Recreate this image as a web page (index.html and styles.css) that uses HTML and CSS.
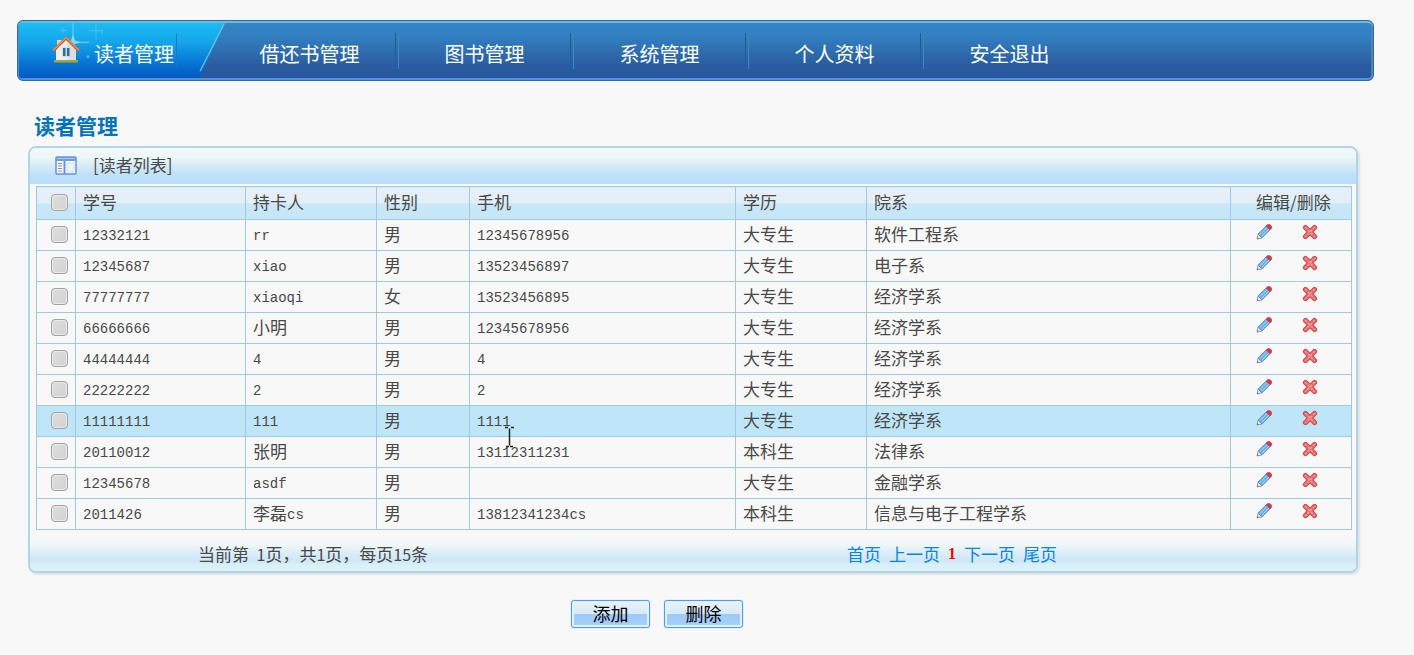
FILE: index.html
```
<!DOCTYPE html>
<html lang="zh-CN">
<head>
<meta charset="utf-8">
<title>读者管理</title>
<link rel="stylesheet" href="styles.css">
</head>
<body>
<svg class="sprites" aria-hidden="true">
  <symbol id="pencil" viewBox="0 0 16 16">
    <path d="M1 15l1-5 4 4z" fill="#e9e4df" stroke="#8d8d8d" stroke-width=".8"/>
    <path d="M1 15l.4-2 1.6 1.600z" fill="#777"/>
    <path d="M2 10l8-8 4 4-8 8z" fill="#6ab0ea" stroke="#5a8fc2" stroke-width=".8"/>
    <path d="M4 10.500l7-7M6 12l7-7" stroke="#a8d4f8" stroke-width="1"/>
    <path d="M10 2l1.500-1.500h2.500l1.800 1.800v2L14 6z" fill="#d8384c" stroke="#b83c50" stroke-width=".5"/>
  </symbol>
  <symbol id="cross" viewBox="0 0 16 16">
    <path d="M3.500 3.500l9 9M12.500 3.500l-9 9" stroke="#c24a4e" stroke-width="5.200" stroke-linecap="round"/>
    <path d="M3.500 3.500l9 9M12.500 3.500l-9 9" stroke="#e86464" stroke-width="3.600" stroke-linecap="round"/>
    <path d="M3.500 3.500l9 9M12.500 3.500l-9 9" stroke="#f4a4a2" stroke-width="1.400" stroke-dasharray="1.500 2.500" stroke-linecap="round"/>
  </symbol>
</svg>
<nav class="nav">
  <a class="nav-item active" href="#">
    <svg class="active-bg" viewBox="0 0 206 57" preserveAspectRatio="none" aria-hidden="true">
      <defs>
        <linearGradient id="sky" x1="0" y1="0" x2="0" y2="1"><stop offset="0" stop-color="#1bbcf4"/><stop offset=".35" stop-color="#15a5ea"/><stop offset=".7" stop-color="#0878d5"/><stop offset="1" stop-color="#0458c1"/></linearGradient>
      </defs>
      <path d="M3 0H206L180 57H3Q0 57 0 54V3Q0 0 3 0z" fill="url(#sky)"/>
      <path d="M205 1L181 50" stroke="#66bdf2" stroke-width="1.300"/>
      <path d="M157.500 11v34" stroke="#0f7cc9"/>
      <path d="M54 0v28M40 20h30" stroke="#8fe0fc" stroke-width="1.200" opacity=".65"/>
      <path d="M54 12l2 6 6 2-6 2-2 6-2-6-6-2 6-2z" fill="#b8ecff" opacity=".6"/>
      <path d="M77 1v16M70 8h14M44 4v7M41 8h7M83 8v4" stroke="#7fd8fa" opacity=".45"/>
      <circle cx="69" cy="35" r="1.500" fill="#57b9ee"/>
    </svg>
    <svg class="house" viewBox="0 0 28 28" aria-hidden="true">
      <path d="M5 4h5v8H5z" fill="#ddd9d8"/>
      <path d="M4 14L14 4l10 10v11H4z" fill="#f0eeed"/>
      <path d="M15 5l9 9v11h-8z" fill="#dedddd"/>
      <path d="M2 24h24v2.500H2z" fill="#a2a63b"/>
      <path d="M1 15L14 2l13 13" fill="none" stroke="#c8591f" stroke-width="2.500"/>
      <path d="M1 14.500L14 1.500l13 13" fill="none" stroke="#fa8a43" stroke-width="1.500"/>
      <path d="M10 11h8v10h-8z" fill="#d0dde6"/>
      <path d="M11 12h2.500v8H11zM15 12h2.500v8H15z" fill="#2e6f9b"/>
    </svg>
    <span>读者管理</span>
  </a>
  <a class="nav-item" href="#">借还书管理</a>
  <a class="nav-item" href="#">图书管理</a>
  <a class="nav-item" href="#">系统管理</a>
  <a class="nav-item" href="#">个人资料</a>
  <a class="nav-item" href="#">安全退出</a>
</nav>
<main class="main">
  <h1 class="title">读者管理</h1>
  <section class="panel">
    <header class="panel-head">
      <svg class="list-icon" viewBox="0 0 22 19" aria-hidden="true">
        <rect x="1" y="1" width="20" height="17" rx="1" fill="#fafcff" stroke="#6a91d0" stroke-width="1.500"/>
        <path d="M1 1h20v4H1z" fill="#719ce0"/>
        <path d="M2 2.500h18" stroke="#a8c4f3"/>
        <path d="M9.500 5v13" stroke="#6a91d0" stroke-width="2"/>
        <path d="M3 7.500h4M3 10h4M3 12.500h4M3 15h4" stroke="#7793bd"/>
        <path d="M12 7h7v9h-7z" fill="#eef2fa" stroke="#d2dced"/>
      </svg>
      <h2 class="panel-title">[读者列表]</h2>
    </header>
    <table class="list">
      <colgroup><col class="c-check"><col class="c-id"><col class="c-name"><col class="c-sex"><col class="c-phone"><col class="c-edu"><col><col class="c-ops"></colgroup>
      <thead>
        <tr><th class="check"><input type="checkbox" aria-label="全选"></th><th>学号</th><th>持卡人</th><th>性别</th><th>手机</th><th>学历</th><th>院系</th><th class="ops-head">编辑/删除</th></tr>
      </thead>
      <tbody id="rows"></tbody>
    </table>
    <footer class="panel-foot">
      <span class="count">当前第&nbsp; <span class="digit">1</span>页，共<span class="digit">1</span>页，每页<span class="digit">15</span>条</span>
      <nav class="pages"><a href="#">首页</a><a href="#">上一页</a><b class="current">1</b><a href="#">下一页</a><a href="#">尾页</a></nav>
    </footer>
  </section>
  <div class="actions">
    <button class="btn" type="button">添加</button>
    <button class="btn" type="button">删除</button>
  </div>
</main>
<script src="rows.js"></script>
</body>
</html>
```
FILE: styles.css
```
* { box-sizing: border-box; }
body {
  margin: 0;
  padding: 20px 40px 20px 17px;
  background: #f8f8f8;
  color: #484848;
  font: 400 17px/24px "Noto Sans CJK SC", sans-serif;
}
a { text-decoration: none; }
.sprites { position: absolute; width: 0; height: 0; }

.nav {
  display: flex;
  height: 61px;
  border: 1px solid #34699f;
  border-radius: 6px;
  background: linear-gradient(#3687c3, #3180c2 25%, #2f6eae 50%, #295da2 75%, #27559a);
  box-shadow: inset 0 2px 0 #65bde3, inset 0 -2px 0 #5591d8, inset 2px 0 0 #4d92cb, inset -2px 0 0 #4d82c0;
}
.nav-item {
  position: relative;
  display: flex;
  align-items: center;
  justify-content: center;
  width: 175px;
  padding-top: 6px;
  color: #fff;
  font-size: 20px;
}
.nav-item:not(.active)::after {
  content: "";
  position: absolute;
  right: -2px;
  top: 12px;
  width: 2px;
  height: 36px;
  border-left: 1px solid #245a99;
  border-right: 1px solid #3f85c0;
}
.nav-item:last-child::after { display: none; }
.active {
  width: 204px;
  justify-content: flex-start;
  gap: 14px;
  padding-left: 34px;
}
.active-bg { position: absolute; left: 1px; top: 2px; width: 206px; height: 55px; }
.house { position: relative; width: 28px; height: 28px; margin-top: -8px; }
.active span { position: relative; }

.main { padding: 31px 16px 0 11px; }
.title {
  margin: 0 0 8px 6px;
  color: #0273b8;
  font-size: 21px;
  line-height: 26px;
  font-weight: 700;
}
.panel {
  border: 2px solid #b0d5ea;
  border-radius: 8px;
  background: #f8f8f8;
  box-shadow: 2px 2px 2px #e2e2e2;
  overflow: hidden;
}
.panel-head {
  display: flex;
  align-items: center;
  gap: 16px;
  height: 36px;
  padding: 0 0 2px 25px;
  background: linear-gradient(#f3faf9, #edf7f8 25%, #d8eef8 45%, #bde1f8 75%, #b9def8);
}
.list-icon { width: 22px; height: 19px; }
.panel-title { margin: 0; font-size: 17px; font-weight: 400; }

.list {
  width: calc(100% - 10px);
  margin: 2px 4px 0 6px;
  table-layout: fixed;
  border-collapse: collapse;
}
.c-check { width: 39px; }
.c-id { width: 170px; }
.c-name { width: 131px; }
.c-sex { width: 93px; }
.c-phone { width: 266px; }
.c-edu { width: 131px; }
.c-ops { width: 121px; }
.list th, .list td {
  height: 31px;
  padding: 0 7px 2px;
  border: 1px solid #9fcae1;
  text-align: left;
  font-weight: 400;
  white-space: nowrap;
}
.list th {
  height: 33px;
  background: linear-gradient(#e7eff8, #e2eff8 48%, #c9e7f7 52%, #c5e7f8);
}
.list .check { padding: 0 0 2px 7px; text-align: center; }
.list .ops-head { padding-left: 25px; }
.check input {
  appearance: none;
  display: block;
  width: 17px;
  height: 17px;
  margin: 0 auto;
  border: 1px solid #a2a2a2;
  border-radius: 4px;
  background: linear-gradient(135deg, #dedede, #d2d2d2);
  box-shadow: inset 0 0 0 1px #e9e9e9;
}
.hover { background: #bfe6f8; }
.num { font: 14px/20px "Liberation Mono", monospace; vertical-align: 1px; }
.ops { display: flex; gap: 30px; padding: 0 0 5px 18px; }
.op {
  display: block;
  width: 16px;
  height: 16px;
  padding: 0;
  border: 0;
  background: none;
}
.op svg { display: block; width: 16px; height: 16px; }
.cursor-cell { position: relative; }
.cursor { position: absolute; left: 32px; top: 19px; width: 15px; height: 24px; z-index: 1; }

.panel-foot {
  display: grid;
  grid-template-columns: 566fr 712fr 48fr;
  align-items: center;
  height: 41px;
  padding-top: 6px;
  background: linear-gradient(#f8f8f8 15%, #eef7f7 38%, #dceef8 55%, #cfe6f7 75%, #d8f0f8 85%, #dcf2f8);
}
.count, .pages { justify-self: center; }
.digit { font-size: 16px; }
.pages { display: flex; gap: 8px; }
.pages a { color: #0a84e0; }
.current { color: #f00; font: 700 16px/24px "Liberation Serif", serif; }

.actions {
  display: flex;
  justify-content: center;
  gap: 14px;
  margin-top: 27px;
  padding-right: 72px;
}
.btn {
  width: 79px;
  height: 28px;
  padding: 0 0 2px;
  border: 1px solid #4a9cf5;
  border-radius: 3px;
  background: linear-gradient(#e9f3f8, #d9e9f8 50%, #9dc9fa 52%, #a9d0fb);
  box-shadow: inset 0 0 0 2px #e4f2fc, 0 0 1px #4a9cf5;
  color: #000;
  font: 400 18px/24px "Noto Sans CJK SC", sans-serif;
}
```
FILE: rows.js
```
const readers = [
  ["12332121", "rr", "男", "12345678956", "大专生", "软件工程系"],
  ["12345687", "xiao", "男", "13523456897", "大专生", "电子系"],
  ["77777777", "xiaoqi", "女", "13523456895", "大专生", "经济学系"],
  ["66666666", "小明", "男", "12345678956", "大专生", "经济学系"],
  ["44444444", "4", "男", "4", "大专生", "经济学系"],
  ["22222222", "2", "男", "2", "大专生", "经济学系"],
  ["11111111", "111", "男", "1111", "大专生", "经济学系"],
  ["20110012", "张明", "男", "13112311231", "本科生", "法律系"],
  ["12345678", "asdf", "男", "", "大专生", "金融学系"],
  ["2011426", "李磊cs", "男", "13812341234cs", "本科生", "信息与电子工程学系"]
];
const hovered = 6;
const cursor = '<svg class="cursor" viewBox="0 0 15 24" aria-hidden="true"><path d="M3 2.500h3M9 2.500h3M7.500 3.500v17M4 21.500h3M8 21.500h3" stroke="#222" stroke-width="1.500" fill="none"/></svg>';
const mono = text => text.replace(/[\x21-\x7e]+/g, '<span class="num">$&</span>');
document.getElementById("rows").innerHTML = readers.map((r, i) => {
  const cells = r.map((text, c) => {
    const pointed = i === hovered && c === 3;
    return `<td${pointed ? ' class="cursor-cell"' : ""}>${mono(text)}${pointed ? cursor : ""}</td>`;
  }).join("");
  return `<tr${i === hovered ? ' class="hover"' : ""}><td class="check"><input type="checkbox" aria-label="选择 ${r[0]}"></td>${cells}` +
    '<td><div class="ops"><button class="op" type="button" aria-label="编辑"><svg><use href="#pencil"/></svg></button>' +
    '<button class="op" type="button" aria-label="删除"><svg><use href="#cross"/></svg></button></div></td></tr>';
}).join("");
```
